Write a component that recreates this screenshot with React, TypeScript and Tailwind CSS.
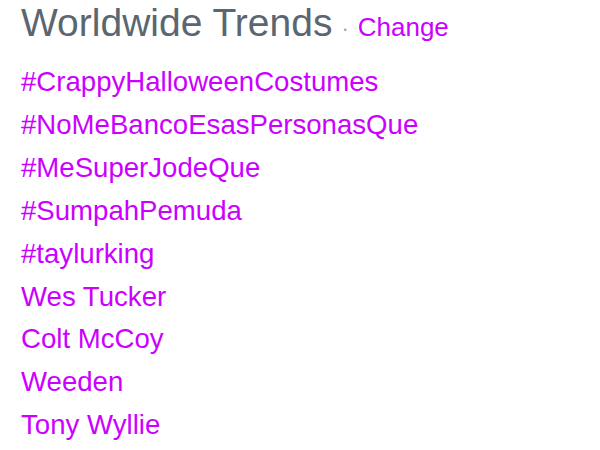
const trends = [
  '#CrappyHalloweenCostumes',
  '#NoMeBancoEsasPersonasQue',
  '#MeSuperJodeQue',
  '#SumpahPemuda',
  '#taylurking',
  'Wes Tucker',
  'Colt McCoy',
  'Weeden',
  'Tony Wyllie',
]

export default function App() {
  return (
    <div className="h-[450px] w-[600px] bg-white px-[21px] pt-0 font-['Liberation_Sans',Arial,sans-serif]">
      <div className="flex items-baseline gap-[9px] leading-[46px]">
        <h2 className="text-[39px] text-[#5b6670]">Worldwide Trends</h2>
        <span className="text-[22px] text-[#9aa3aa]">·</span>
        <a className="text-[26px] text-[#cc00ff]">Change</a>
      </div>
      <ul className="mt-[9px] flex flex-col">
        {trends.map((t) => (
          <li key={t} className="text-[27.6px] leading-[42.9px] text-[#cc00ff]">
            {t}
          </li>
        ))}
      </ul>
    </div>
  )
}
